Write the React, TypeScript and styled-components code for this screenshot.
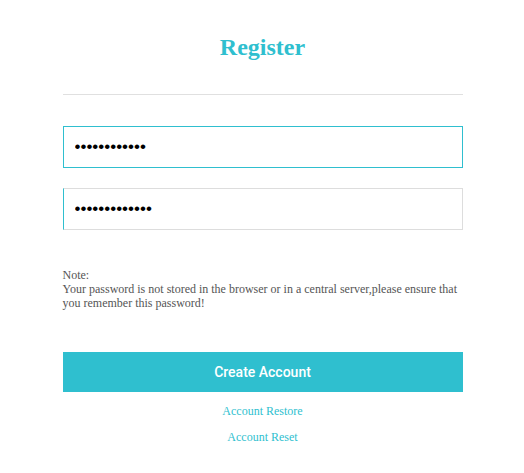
import { createGlobalStyle } from 'styled-components';
import styled from 'styled-components';

const teal = '#2fbfcf';

const GlobalStyle = createGlobalStyle`
  html, body {
    margin: 0;
    padding: 0;
    background: #fff;
  }
  body {
    font-family: 'Liberation Serif', 'Times New Roman', serif;
  }
`;

const Container = styled.div`
  width: 400px;
  margin: 0 auto;
  padding: 33px 0 0 1px;
  display: flex;
  flex-direction: column;
`;

const Title = styled.h1`
  margin: 0;
  font-family: 'Liberation Serif', 'Times New Roman', serif;
  font-size: 24px;
  line-height: 28px;
  font-weight: 700;
  color: ${teal};
  text-align: center;
`;

const Divider = styled.hr`
  margin: 33px 0 0;
  border: 0;
  height: 1px;
  background: #e0e0e0;
`;

const Form = styled.form`
  display: flex;
  flex-direction: column;
  gap: 20px;
  margin-top: 31px;
`;

const Input = styled.input<{ $active?: boolean }>`
  box-sizing: border-box;
  width: 100%;
  height: 42px;
  padding: 0 11px;
  border: 1px solid ${(p) => (p.$active ? teal : '#dddddd')};
  border-left-color: ${teal};
  outline: none;
  font-size: 17px;
  font-family: 'Liberation Sans', Arial, sans-serif;
  color: #000;
  caret-color: #000;
  background: #fff;
`;

const Note = styled.p`
  margin: 38px 0 0;
  font-size: 12px;
  line-height: 14px;
  color: #555;
`;

const Button = styled.button`
  margin-top: 42px;
  height: 40px;
  border: 0;
  background: ${teal};
  color: #fff;
  font-family: Roboto, 'Liberation Sans', Arial, sans-serif;
  font-weight: 500;
  font-size: 14px;
  cursor: pointer;
`;

const Links = styled.div`
  display: flex;
  flex-direction: column;
  align-items: center;
  gap: 12px;
  margin-top: 12px;
`;

const LinkText = styled.a`
  font-size: 12px;
  line-height: 14px;
  color: ${teal};
  text-decoration: none;
  cursor: pointer;
`;

const App = () => {
  return (
    <>
      <GlobalStyle />
      <Container>
        <Title>Register</Title>
        <Divider />
        <Form onSubmit={(e) => e.preventDefault()}>
          <Input $active type='password' defaultValue='............' autoFocus />
          <Input type='password' defaultValue='.............' />
        </Form>
        <Note>
          Note:
          <br />
          Your password is not stored in the browser or in a central server,please ensure that
          you remember this password!
        </Note>
        <Button>Create Account</Button>
        <Links>
          <LinkText>Account Restore</LinkText>
          <LinkText>Account Reset</LinkText>
        </Links>
      </Container>
    </>
  );
};

export default App;
